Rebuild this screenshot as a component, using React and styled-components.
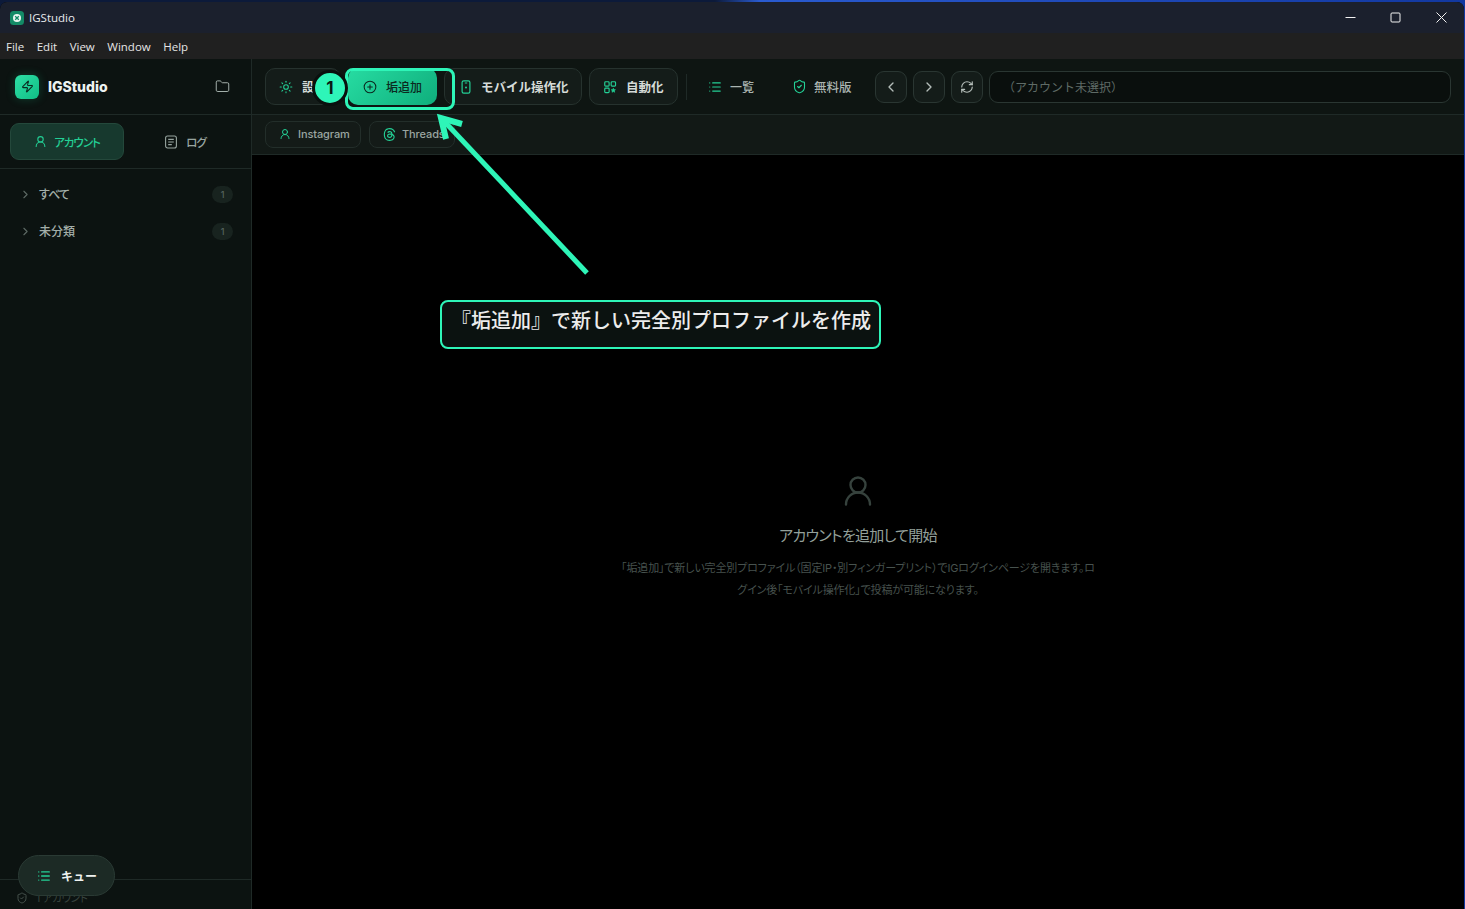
import React from 'react';
import styled, { createGlobalStyle } from 'styled-components';
import {
  ChevronLeft,
  ChevronRight,
  CirclePlus,
  Folder,
  List,
  RefreshCw,
  ShieldCheck,
  Sun,
  UserRound,
  Zap,
} from 'lucide-react';
import { SiThreads } from 'react-icons/si';

const GlobalStyle = createGlobalStyle`
  html, body {
    margin: 0;
    height: 100%;
    background: #0a1430;
    overflow: hidden;
  }
  #root { height: 100%; }
  * { box-sizing: border-box; }
`;

const Desktop = styled.div`
  position: relative;
  width: 1465px;
  height: 909px;
  padding-top: 2px;
  font-family: Inter, "Noto Sans CJK JP", sans-serif;
  background: linear-gradient(90deg, #0c1a3a 0, #0c1a3a 715px, #2a5bd0 760px, #1f49b8 1100px, #1238a0 1465px);
`;

const Window = styled.div`
  display: flex;
  flex-direction: column;
  height: 907px;
  margin-right: 1px;
  border-radius: 7px 7px 0 0;
  overflow: hidden;
  background: #000;
`;

const TitleBar = styled.div`
  display: flex;
  align-items: center;
  flex: 0 0 31px;
  padding-left: 10px;
  background: #1b202d;
  color: #e8eaee;
  font: 400 11.5px "Open Sans", Inter, sans-serif;
`;

const AppMark = styled.svg`
  width: 14px;
  height: 14px;
  margin-right: 5px;
`;

const WindowControls = styled.div`
  display: flex;
  margin-left: auto;
`;

const WindowControl = styled.div`
  display: flex;
  align-items: center;
  justify-content: center;
  width: 45.5px;
  height: 31px;
`;

const MenuBar = styled.div`
  display: flex;
  align-items: center;
  gap: 12.5px;
  flex: 0 0 26px;
  padding-left: 6px;
  background: #202020;
  color: #e6e6e6;
  font: 400 11.5px "Open Sans", Inter, sans-serif;
`;

const Body = styled.div`
  display: grid;
  grid-template-columns: 252px 1fr;
  flex: 1;
  min-height: 0;
`;

const Sidebar = styled.aside`
  display: flex;
  flex-direction: column;
  background: #0c1311;
  border-right: 1px solid #1f2a27;
`;

const SidebarHeader = styled.div`
  display: flex;
  align-items: center;
  flex: 0 0 56px;
  padding: 0 21px 0 15px;
  border-bottom: 1px solid #1f2a27;
`;

const LogoBadge = styled.div`
  display: flex;
  align-items: center;
  justify-content: center;
  width: 24px;
  height: 24px;
  margin-right: 9px;
  border-radius: 6px;
  background: linear-gradient(135deg, #2ee0a6, #10bd85);
  box-shadow: 0 0 10px rgba(24, 200, 140, 0.25);
  color: #0b2a20;
`;

const Brand = styled.div`
  flex: 1;
  color: #edf2f0;
  font-size: 14px;
  font-weight: 800;
`;

const SidebarTabs = styled.div`
  display: grid;
  grid-template-columns: 114px 1fr;
  gap: 0;
  flex: 0 0 54px;
  padding: 8px 9px 7px 10px;
  border-bottom: 1px solid #1f2a27;
`;

const SidebarTab = styled.div`
  display: flex;
  align-items: center;
  justify-content: center;
  gap: ${p => (p.$active ? 7 : 8)}px;
  height: 37px;
  padding-left: ${p => (p.$active ? 0 : 4)}px;
  border: 1px solid ${p => (p.$active ? '#24483b' : 'transparent')};
  border-radius: 9px;
  background: ${p => (p.$active ? '#17392e' : 'transparent')};
  color: ${p => (p.$active ? '#23cf95' : '#98a5a0')};
  font-size: 11.5px;
  font-weight: 500;
  letter-spacing: -1px;
  font-feature-settings: "palt";
`;

const Tree = styled.div`
  display: flex;
  flex-direction: column;
  flex: 1;
  padding-top: 7px;
`;

const TreeRow = styled.div`
  display: flex;
  align-items: center;
  height: 37px;
  padding: 0 18px 0 19px;
  color: #a3afaa;
  font-size: 12px;
  font-weight: 500;
  font-feature-settings: "palt";
`;

const TreeLabel = styled.span`
  flex: 1;
  margin-left: 7px;
  padding-bottom: 2px;
  letter-spacing: ${p => p.$spacing || 0}px;
`;

const CountBadge = styled.span`
  display: flex;
  align-items: center;
  justify-content: center;
  width: 21px;
  height: 17px;
  border-radius: 9px;
  background: #18231f;
  color: #56635e;
  font-size: 9px;
`;

const SidebarFooter = styled.div`
  display: flex;
  align-items: center;
  gap: 8px;
  flex: 0 0 30px;
  padding: 6px 0 0 16px;
  border-top: 1px solid #1f2a27;
  color: #38433f;
  font-size: 10.5px;
  letter-spacing: -0.3px;
  font-feature-settings: "palt";
`;

const QueueButton = styled.div`
  position: absolute;
  left: 18px;
  top: 855px;
  display: flex;
  align-items: center;
  gap: 10px;
  width: 97px;
  height: 41px;
  padding-left: 18px;
  border: 1px solid #2a3a34;
  border-radius: 21px;
  background: #1c2a25;
  color: #eef2f0;
  font-size: 12px;
  font-weight: 700;
`;

const Main = styled.main`
  display: flex;
  flex-direction: column;
  min-width: 0;
`;

const Toolbar = styled.div`
  display: flex;
  align-items: center;
  flex: 0 0 56px;
  padding: 0 13px;
  background: #0e1512;
  border-bottom: 1px solid #1f2a27;
`;

const ToolButton = styled.div`
  display: flex;
  align-items: center;
  flex: 0 0 auto;
  gap: ${p => p.$gap || 9}px;
  width: ${p => p.$width}px;
  height: 37px;
  margin-right: ${p => p.$after ?? 7}px;
  padding-left: ${p => p.$left ?? 13}px;
  border: 1px solid #26322e;
  border-radius: 10px;
  background: #141c19;
  color: #d5dbd8;
  font-size: 12.5px;
  font-weight: 700;
  svg { color: #23cf95; flex: none; }
`;

const PrimaryButton = styled(ToolButton)`
  border: none;
  background: linear-gradient(135deg, #27dca2, #0fae7c);
  color: #0b2a20;
  font-size: 12px;
  font-weight: 500;
  padding-left: 15px;
  svg { color: #0b2a20; }
`;

const Divider = styled.div`
  flex: none;
  width: 1px;
  height: 26px;
  margin-right: 10px;
  background: #1f2a27;
`;

const GhostButton = styled.div`
  display: flex;
  align-items: center;
  flex: none;
  gap: ${p => p.$gap}px;
  width: ${p => p.$width}px;
  height: 37px;
  padding-left: ${p => p.$left}px;
  color: #aab4b0;
  font-size: ${p => p.$size}px;
  font-weight: 500;
  svg { color: #23cf95; flex: none; }
`;

const NavButton = styled.div`
  display: flex;
  align-items: center;
  justify-content: center;
  flex: none;
  width: 32px;
  height: 32px;
  margin-right: 6px;
  border: 1px solid #2a3632;
  border-radius: 9px;
  background: #141c19;
  color: #b4bdb9;
`;

const AddressBar = styled.div`
  display: flex;
  align-items: center;
  flex: 1;
  height: 32px;
  padding-left: 13px;
  border: 1px solid #2a3632;
  border-radius: 9px;
  background: #0a0f0d;
  color: #5f6b66;
  font-size: 12px;
`;

const SubBar = styled.div`
  display: flex;
  align-items: center;
  gap: 8px;
  flex: 0 0 40px;
  padding: 0 13px;
  background: #121916;
  border-bottom: 1px solid #1f2a27;
`;

const SubPill = styled.div`
  display: flex;
  align-items: center;
  gap: ${p => p.$gap}px;
  width: ${p => p.$width}px;
  height: 27px;
  padding: 0 0 1px 13px;
  border: 1px solid #232e2a;
  border-radius: 8px;
  background: #141b18;
  color: #9aa5a1;
  font-size: 11px;
  font-weight: 500;
  letter-spacing: -0.1px;
  svg { color: #23cf95; flex: none; }
`;

const Content = styled.div`
  display: flex;
  flex-direction: column;
  align-items: center;
  flex: 1;
  padding-top: 318px;
  background: #000;
`;

const EmptyIcon = styled.div`
  display: flex;
  color: #36423d;
`;

const EmptyTitle = styled.h2`
  margin: 15px 0 0;
  color: #94a09b;
  font-size: 15px;
  font-weight: 400;
  line-height: 24px;
  letter-spacing: -0.7px;
  font-feature-settings: "palt";
`;

const EmptyText = styled.p`
  width: 482px;
  margin: 9px 0 0;
  color: #47524e;
  font-size: 11px;
  line-height: 22px;
  letter-spacing: -0.15px;
  text-align: center;
  font-feature-settings: "palt";
`;

const Highlight = styled.div`
  position: absolute;
  left: 345px;
  top: 68px;
  width: 110px;
  height: 42px;
  border: 3px solid #2ef5b8;
  border-radius: 8px;
`;

const StepBadge = styled.div`
  position: absolute;
  left: 312px;
  top: 70px;
  display: flex;
  align-items: center;
  justify-content: center;
  width: 36px;
  height: 36px;
  border: 3px solid #0a100e;
  border-radius: 50%;
  background: #2ef5b8;
  color: #0a1a14;
  font-size: 17px;
  font-weight: 700;
`;

const ArrowLayer = styled.svg`
  position: absolute;
  left: 430px;
  top: 105px;
  width: 170px;
  height: 180px;
`;

const Callout = styled.div`
  position: absolute;
  left: 440px;
  top: 300px;
  display: flex;
  align-items: center;
  width: 441px;
  height: 49px;
  padding: 0 0 10px 9px;
  border: 2px solid #2ef5b8;
  border-radius: 8px;
  background: #0b1210;
  color: #ececec;
  font-size: 20px;
  font-weight: 500;
  white-space: nowrap;
`;

const AutomationIcon = () => (
  <svg width="14" height="14" viewBox="0 0 24 24" fill="none" stroke="currentColor" strokeWidth="2" strokeLinejoin="round">
    <rect x="3" y="3" width="7.5" height="7.5" rx="1.5" />
    <rect x="14" y="3" width="7.5" height="7.5" rx="1.5" />
    <rect x="3" y="14" width="7.5" height="7.5" rx="1.5" />
    <path d="M17.7 14l1.1 2.4 2.6.3-1.9 1.8.5 2.6-2.3-1.3-2.3 1.3.5-2.6-1.9-1.8 2.6-.3z" fill="currentColor" strokeWidth="1" />
  </svg>
);

const PhoneIcon = () => (
  <svg width="14" height="14" viewBox="0 0 14 14" fill="none" stroke="currentColor" strokeWidth="1.2">
    <rect x="3.1" y="0.8" width="7.8" height="12.4" rx="1.6" />
    <path d="M5.8 3h2.4" />
    <circle cx="7" cy="7.6" r="1" fill="currentColor" stroke="none" />
  </svg>
);

const LogIcon = () => (
  <svg width="14" height="14" viewBox="0 0 14 14" fill="none" stroke="currentColor" strokeWidth="1.1">
    <rect x="1.6" y="1" width="10.8" height="12" rx="2" />
    <path d="M4.2 4.4h5.6M4.2 7h5.6M4.2 9.6h3.6" />
  </svg>
);

const App = () => (
  <Desktop>
    <GlobalStyle />
    <Window>
      <TitleBar>
        <AppMark viewBox="0 0 14 14">
          <rect width="14" height="14" rx="3.5" fill="#138a66" />
          <circle cx="7" cy="7" r="4" fill="#e8f5f0" />
          <path d="M5.2 5.2l3.6 3.6M8.8 5.2L5.2 8.8" stroke="#138a66" strokeWidth="1.3" />
        </AppMark>
        IGStudio
        <WindowControls>
          <WindowControl>
            <svg width="11" height="11" viewBox="0 0 11 11"><path d="M0.5 5.5h10" stroke="#f2f2f2" /></svg>
          </WindowControl>
          <WindowControl>
            <svg width="11" height="11" viewBox="0 0 11 11"><rect x="1" y="1" width="9" height="9" rx="1" fill="none" stroke="#f2f2f2" /></svg>
          </WindowControl>
          <WindowControl>
            <svg width="11" height="11" viewBox="0 0 11 11"><path d="M0.5 0.5l10 10M10.5 0.5l-10 10" stroke="#f2f2f2" /></svg>
          </WindowControl>
        </WindowControls>
      </TitleBar>
      <MenuBar>
        <span>File</span>
        <span>Edit</span>
        <span>View</span>
        <span>Window</span>
        <span>Help</span>
      </MenuBar>
      <Body>
        <Sidebar>
          <SidebarHeader>
            <LogoBadge><Zap size={13} strokeWidth={2} /></LogoBadge>
            <Brand>IGStudio</Brand>
            <Folder size={15} color="#a3afaa" strokeWidth={1.6} />
          </SidebarHeader>
          <SidebarTabs>
            <SidebarTab $active><UserRound size={13} strokeWidth={2} />アカウント</SidebarTab>
            <SidebarTab><LogIcon />ログ</SidebarTab>
          </SidebarTabs>
          <Tree>
            <TreeRow>
              <ChevronRight size={13} color="#5c6964" />
              <TreeLabel $spacing={-1}>すべて</TreeLabel>
              <CountBadge>1</CountBadge>
            </TreeRow>
            <TreeRow>
              <ChevronRight size={13} color="#5c6964" />
              <TreeLabel>未分類</TreeLabel>
              <CountBadge>1</CountBadge>
            </TreeRow>
          </Tree>
          <SidebarFooter>
            <ShieldCheck size={12} color="#46524d" />
            1 アカウント
          </SidebarFooter>
        </Sidebar>
        <Main>
          <Toolbar>
            <ToolButton $width={76}><Sun size={14} strokeWidth={1.8} />設定</ToolButton>
            <PrimaryButton $width={89}><CirclePlus size={14} strokeWidth={1.8} />垢追加</PrimaryButton>
            <ToolButton $width={138} $gap={8} $left={14}><PhoneIcon />モバイル操作化</ToolButton>
            <ToolButton $width={89} $after={8} $gap={9}><AutomationIcon />自動化</ToolButton>
            <Divider />
            <GhostButton $width={84} $left={11} $gap={8} $size={12}><List size={14} strokeWidth={2} />一覧</GhostButton>
            <GhostButton $width={94} $left={11} $gap={7} $size={12.5}><ShieldCheck size={15} strokeWidth={1.8} />無料版</GhostButton>
            <NavButton><ChevronLeft size={16} /></NavButton>
            <NavButton><ChevronRight size={16} /></NavButton>
            <NavButton><RefreshCw size={14} /></NavButton>
            <AddressBar>（アカウント未選択）</AddressBar>
          </Toolbar>
          <SubBar>
            <SubPill $width={96} $gap={7}><UserRound size={12} strokeWidth={2} />Instagram</SubPill>
            <SubPill $width={86} $gap={6}><SiThreads size={13} />Threads</SubPill>
          </SubBar>
          <Content>
            <EmptyIcon><UserRound size={36} strokeWidth={1.6} /></EmptyIcon>
            <EmptyTitle>アカウントを追加して開始</EmptyTitle>
            <EmptyText>
              「垢追加」で新しい完全別プロファイル（固定IP・別フィンガープリント）でIGログインページを開きます。ログイン後「モバイル操作化」で投稿が可能になります。
            </EmptyText>
          </Content>
        </Main>
      </Body>
    </Window>
    <QueueButton><List size={14} color="#23cf95" strokeWidth={2.4} />キュー</QueueButton>
    <Highlight />
    <StepBadge>1</StepBadge>
    <ArrowLayer viewBox="0 0 170 180">
      <path d="M157 168L13 15" stroke="#2ef5b8" strokeWidth="5" fill="none" />
      <path d="M32 19L11 13L16 34" stroke="#2ef5b8" strokeWidth="6" fill="none" />
    </ArrowLayer>
    <Callout>『垢追加』で新しい完全別プロファイルを作成</Callout>
  </Desktop>
);

export default App;
